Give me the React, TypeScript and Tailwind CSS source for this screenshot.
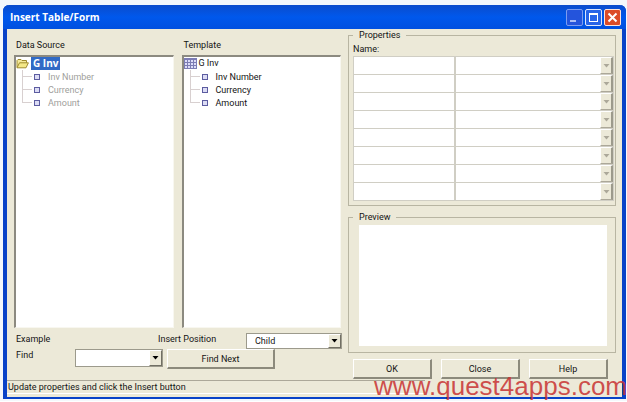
import type { ReactNode } from "react";

const FIELDS = ["Inv Number", "Currency", "Amount"];
const ROWS = [1, 2, 3, 4, 5, 6, 7, 8];

function FolderIcon() {
  return (
    <svg width="13" height="11" viewBox="0 0 13 11" aria-hidden="true">
      <path d="M1 9.5V2.5L2 1.5H5L6 2.5H10.5V5" fill="#f5ea9a" stroke="#a08c2c" />
      <path d="M1 9.8L3.5 4.8H12.4L10 9.8Z" fill="#f4e888" stroke="#a08c30" />
    </svg>
  );
}

function GridIcon() {
  return (
    <svg width="13" height="11" viewBox="0 0 13 11" shapeRendering="crispEdges" aria-hidden="true">
      <rect width="13" height="11" fill="#7c7cb4" />
      {[0, 1, 2, 3].map((c) =>
        [0, 1, 2].map((r) => (
          <rect key={`${c}-${r}`} x={1 + c * 3} y={2 + r * 3} width="2" height="2" fill="#dcdcf8" />
        )),
      )}
    </svg>
  );
}

function LeafIcon() {
  return (
    <svg width="6" height="6" viewBox="0 0 6 6" aria-hidden="true">
      <rect x="0.5" y="0.5" width="5" height="5" fill="#dcdcf4" stroke="#5c5ca0" />
    </svg>
  );
}

function TreeBox({ icon, active, label }: { icon: ReactNode; active?: boolean; label: string }) {
  return (
    <section className="flex min-w-0 flex-1 flex-col">
      <h2 className="h-4 px-0.5 leading-3">{label}</h2>
      <ul className="h-[273px] border border-t-2 border-l-2 border-t-[#8c8a80] border-l-[#8c8a80] border-r-[#f8f7f0] border-b-[#f8f7f0] bg-white">
        <li>
          <div className="flex h-[13px] items-center gap-0.5">
            {icon}
            <span
              className={
                active
                  ? "bg-[#316ac5] px-0.5 font-['Open_Sans','Noto_Sans',sans-serif] text-[10px] leading-[13px] font-bold text-white"
                  : "leading-[13px]"
              }
            >
              G Inv
            </span>
          </div>
          <ul className={active ? "text-[#a0a09c]" : ""}>
            {FIELDS.map((f, i) => (
              <li key={f} className="flex h-[13px] items-center pl-1.5">
                <svg width="10" height="13" viewBox="0 0 10 13" shapeRendering="crispEdges" aria-hidden="true">
                  <path d={i === 2 ? "M0.5 0V6.5H10" : "M0.5 0V13M0 6.5H10"} fill="none" stroke="#d8d0d0" />
                </svg>
                <span className="flex w-4 pl-0.5">
                  <LeafIcon />
                </span>
                {f}
              </li>
            ))}
          </ul>
        </li>
      </ul>
    </section>
  );
}

function Arrow({ muted }: { muted?: boolean }) {
  return (
    <span
      className={`pointer-events-none flex w-[13px] items-center justify-center border border-t-white border-l-white bg-[#ece9d8] ${
        muted ? "border-r-2 border-r-[#9c9a8c] border-b-[#aca899] text-[#aca899]" : "border-r-[#716f64] border-b-[#716f64] text-black"
      }`}
    >
      <svg width="7" height="4" viewBox="0 0 7 4" aria-hidden="true">
        <path d="M0.5 0H6.5L3.5 3.5Z" fill="currentColor" />
      </svg>
    </span>
  );
}

function PushButton({ children }: { children: ReactNode }) {
  return (
    <button
      type="button"
      className="h-5 w-full border border-t-white border-l-white border-r-2 border-b-2 border-r-[#8c8a7c] border-b-[#8c8a7c] bg-[#ece9d8]"
    >
      {children}
    </button>
  );
}

export default function App() {
  return (
    <div className="relative bg-[#f4f8fc] pt-[5px] pr-px pb-0.5 pl-[3px] font-[Roboto,'Noto_Sans',sans-serif] text-[9px] leading-3 text-[#141414]">
      <main className="rounded-t-md border-x-4 border-b-2 border-[#0842c8] bg-[#ece9d8]">
        <header className="-mx-1 flex h-6 items-center justify-between rounded-t-md bg-linear-to-b from-[#0a4ccc] via-[#0058ec] to-[#0050e0] pr-[5px] pl-[7px]">
          <h1 className="font-['Open_Sans','Noto_Sans',sans-serif] text-[10px] font-bold text-white">Insert Table/Form</h1>
          <div className="flex gap-0.5">
            <button type="button" aria-label="Minimize" className="flex size-[17px] items-end rounded-xs border border-[#7c9cf0] bg-[#2454dc] p-[3px]">
              <span className="h-0.5 w-1.5 bg-[#a8bcf4]" />
            </button>
            <button type="button" aria-label="Maximize" className="size-[17px] rounded-xs border border-[#dce6fc] bg-[#2864e8] p-[3px]">
              <span className="block h-[9px] border border-t-2 border-white" />
            </button>
            <button type="button" aria-label="Close window" className="flex size-[17px] items-center justify-center rounded-xs border border-[#fce4dc] bg-[#dc4c28]">
              <svg width="11" height="11" viewBox="0 0 11 11" aria-hidden="true">
                <path d="M1.5 1.5L9.5 9.5M9.5 1.5L1.5 9.5" stroke="white" strokeWidth="2" />
              </svg>
            </button>
          </div>
        </header>

        <div className="flex gap-1.5 pr-1.5 pl-[7px]">
          <div className="flex-[328] pt-2.5">
            <div className="flex gap-2 pr-px">
              <TreeBox label="Data Source" icon={<FolderIcon />} active />
              <TreeBox label="Template" icon={<GridIcon />} />
            </div>
            <div className="flex justify-between pt-[5px] pl-0.5">
              <span>Example</span>
              <label className="flex">
                <span className="w-[88px]">Insert Position</span>
                <span className="flex h-4 w-24 border border-[#9c9a8c] bg-white">
                  <select defaultValue="Child" className="min-w-0 flex-1 appearance-none pl-2">
                    <option>Child</option>
                  </select>
                  <Arrow />
                </span>
              </label>
            </div>
            <div className="flex pl-0.5">
              <label className="flex">
                <span className="w-[59px]">Find</span>
                <span className="flex h-[18px] w-[88px] border border-[#9c9a8c] bg-white">
                  <input list="matches" className="w-0 flex-1 outline-none" />
                  <Arrow />
                </span>
              </label>
              <div className="ml-1 w-[108px]">
                <PushButton>Find Next</PushButton>
              </div>
            </div>
          </div>

          <div className="flex-[268]">
            <fieldset className="h-[177px] border border-[#b8b5a2] pr-px pl-1">
              <legend className="-my-1.5 h-3 bg-[#ece9d8] px-1.5">Properties</legend>
              <p className="pt-2 pb-px">Name:</p>
              <table className="w-full table-fixed border-collapse">
                <tbody>
                  {ROWS.map((r) => (
                    <tr key={r} className="h-[18px] border border-[#d0cec4] bg-white">
                      <td className="w-[39%] border-r-2 border-[#d0cec4]" />
                      <td className="p-0">
                        <div className="flex h-[17px] justify-end">
                          <Arrow muted />
                        </div>
                      </td>
                    </tr>
                  ))}
                </tbody>
              </table>
            </fieldset>
            <fieldset className="mt-[5px] h-[142px] border border-[#b8b5a2] pr-2 pl-2.5">
              <legend className="-ml-1.5 -my-1.5 h-3 bg-[#ece9d8] px-1.5">Preview</legend>
              <div className="mt-2 h-[121px] bg-white" />
            </fieldset>
            <div className="mt-1.5 flex gap-[9px] pr-2 pl-[5px]">
              <PushButton>OK</PushButton>
              <PushButton>Close</PushButton>
              <PushButton>Help</PushButton>
            </div>
          </div>
        </div>

        <footer className="mt-px mb-[3px] w-[68%] border-t border-b border-t-[#aca899] border-b-white pl-px">
          Update properties and click the Insert button
        </footer>
      </main>
      <div className="absolute right-0 bottom-0 font-['Liberation_Sans',Arial,sans-serif] text-[26px] leading-[30px] text-[#c83232]/85">
        www.quest4apps.com
      </div>
    </div>
  );
}
